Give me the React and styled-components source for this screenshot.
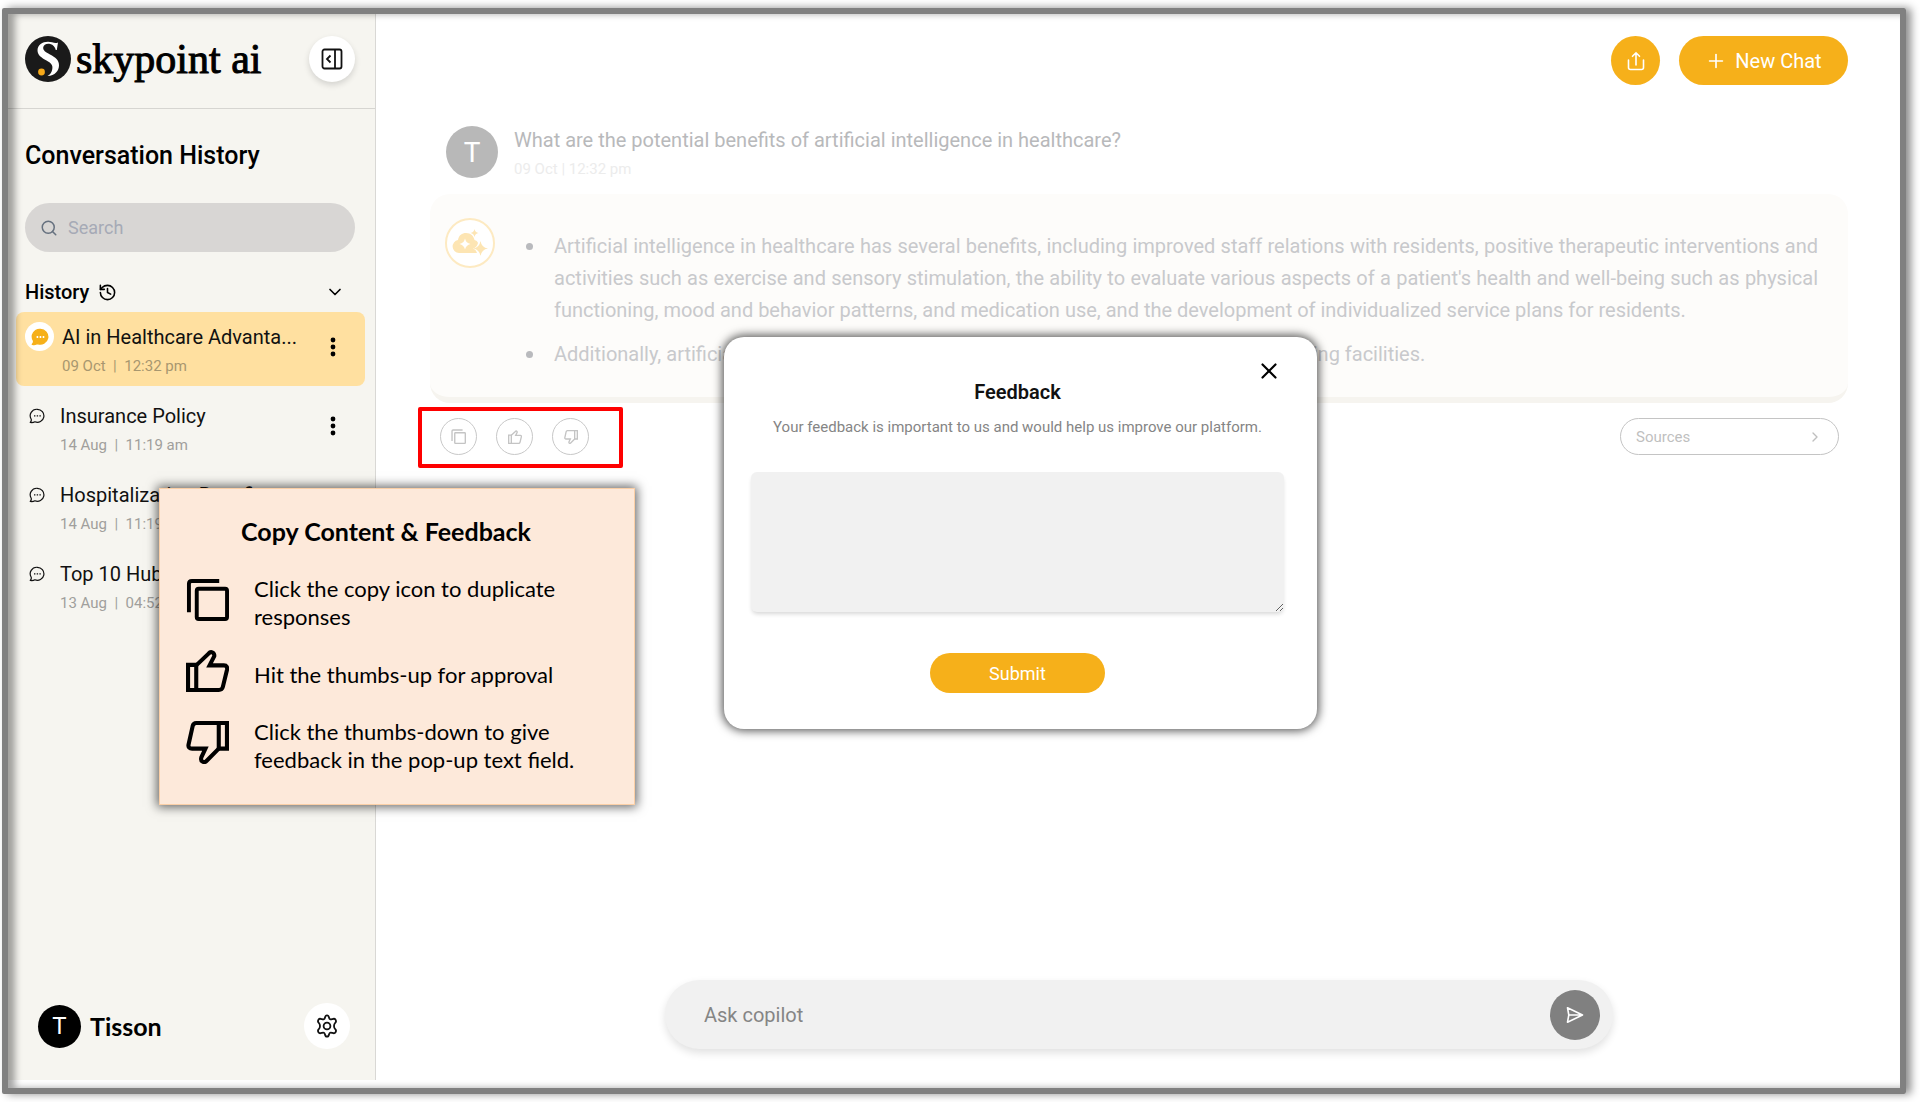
import React, { useState } from "react";
import styled, { createGlobalStyle, css } from "styled-components";
import { ChevronDown, ChevronRight, History, Plus, Search, X } from "lucide-react";

const GlobalStyle = createGlobalStyle`
  *, *::before, *::after {
    box-sizing: border-box;
  }
  body {
    margin: 0;
    background: #fff;
    color: #111;
    font-family: Roboto, "Liberation Sans", sans-serif;
  }
  button, input, textarea {
    font-family: inherit;
  }
  h1, h2, p, ul {
    margin: 0;
    padding: 0;
  }
`;

const Page = styled.div`
  display: flex;
  min-height: 100vh;
  padding: 8px 14px 8px 2px;
`;

const Frame = styled.div`
  position: relative;
  flex: 1;
  display: flex;
  border: 6px solid #808080;
  border-radius: 2px;
  box-shadow: 5px 0 8px rgba(0, 0, 0, 0.45);

  &::after {
    content: "";
    position: absolute;
    inset: 0;
    pointer-events: none;
    box-shadow: inset 7px 0 7px rgba(0, 0, 0, 0.35);
  }
`;

const center = css`
  display: flex;
  align-items: center;
  justify-content: center;
  flex: none;
`;

const RoundButton = styled.button`
  ${center}
  width: ${props => props.size}px;
  height: ${props => props.size}px;
  padding: 0;
  border: 0;
  border-radius: 50%;
  background: ${props => props.bg || "#fff"};
  color: ${props => props.color || "#111"};
  box-shadow: ${props => (props.raised ? "0 3px 6px rgba(0, 0, 0, 0.14)" : "none")};
`;

/* sidebar */

const Sidebar = styled.aside`
  width: 368px;
  flex: none;
  display: flex;
  flex-direction: column;
  margin-bottom: 8px;
  background: #f6f5f0;
  border-right: 1px solid #d9d8d5;
`;

const SidebarHead = styled.header`
  display: flex;
  align-items: center;
  justify-content: space-between;
  height: 95px;
  padding: 0 20px 4px 17px;
  border-bottom: 1px solid #d6d5d1;
`;

const Brand = styled.div`
  display: flex;
  align-items: center;
  gap: 5px;
  font-family: "Liberation Serif", serif;
  font-size: 42px;
  line-height: 46px;
  color: #000;
  -webkit-text-stroke: 1px #000;
`;

const SidebarTitle = styled.h2`
  padding: 31px 17px 0;
  font-size: 25px;
  font-weight: 500;
  line-height: 32px;
  color: #000;
`;

const SearchBox = styled.label`
  display: flex;
  align-items: center;
  gap: 10px;
  height: 49px;
  margin: 31px 20px 0 17px;
  padding: 0 15px;
  border-radius: 25px;
  background: #d8d6d4;
  color: #66717f;

  input {
    flex: 1;
    min-width: 0;
    padding: 0;
    border: 0;
    outline: 0;
    background: none;
    font-size: 18px;
  }
  input::placeholder {
    color: #a6aab6;
  }
`;

const HistoryToggle = styled.button`
  display: flex;
  align-items: center;
  gap: 9px;
  margin: 26px 30px 6px 17px;
  padding: 0;
  border: 0;
  background: none;
  color: #000;
  font-size: 20px;
  font-weight: 500;
  line-height: 28px;

  svg:last-child {
    margin-left: auto;
  }
`;

const ChatList = styled.ul`
  flex: 1;
  display: flex;
  flex-direction: column;
  gap: 5px;
  list-style: none;
`;

const ChatItem = styled.li`
  display: flex;
  height: 74px;
  margin: 0 10px 0 8px;
  padding: 10px 22px 0 ${props => (props.active ? 9 : 13)}px;
  gap: ${props => (props.active ? 8 : 15)}px;
  border-radius: 8px;
  background: ${props => (props.active ? "#ffe0a0" : "transparent")};
`;

const ChatIcon = styled.span`
  ${center}
  width: ${props => (props.active ? 29 : 16)}px;
  height: 29px;
  border-radius: 50%;
  background: ${props => (props.active ? "#fff" : "none")};
`;

const ChatText = styled.div`
  flex: 1;
  min-width: 0;
`;

const ChatTitle = styled.p`
  white-space: nowrap;
  font-size: 20px;
  line-height: 30px;
`;

const ChatDate = styled.p`
  padding-top: 4px;
  font-size: 15px;
  line-height: 20px;
  white-space: pre;
  color: ${props => (props.active ? "#a8976f" : "#a09f9c")};
`;

const KebabButton = styled.button`
  ${center}
  width: 20px;
  height: 50px;
  padding: 0;
  border: 0;
  background: none;
  color: #000;
`;

const UserBar = styled.footer`
  display: flex;
  align-items: center;
  gap: 9px;
  padding: 0 25px 31px 30px;
  font-family: Lato, sans-serif;
  font-size: 25px;
  font-weight: 700;
  color: #000;

  button {
    margin-left: auto;
  }
`;

const Avatar = styled.span`
  ${center}
  width: ${props => props.size}px;
  height: ${props => props.size}px;
  border-radius: 50%;
  background: ${props => props.bg};
  color: #fff;
  font-family: Roboto, sans-serif;
  font-size: ${props => props.font}px;
  font-weight: 400;
`;

/* chat */

const Main = styled.main`
  flex: 1;
  min-width: 0;
  display: flex;
  flex-direction: column;
  padding: 22px 52px 39px 54px;
`;

const TopBar = styled.div`
  display: flex;
  justify-content: flex-end;
  gap: 19px;
`;

const NewChatButton = styled.button`
  ${center}
  gap: 8px;
  width: 169px;
  height: 49px;
  padding: 0;
  border: 0;
  border-radius: 25px;
  background: #f6b01a;
  color: #fff;
  font-size: 20px;
`;

const Question = styled.div`
  display: flex;
  gap: 16px;
  padding: 41px 16px 15px;
`;

const QuestionText = styled.p`
  font-size: 20px;
  line-height: 28px;
  color: #b8b9bb;
`;

const QuestionDate = styled.p`
  padding-top: 5px;
  font-size: 15px;
  line-height: 20px;
  color: #ececec;
`;

const Answer = styled.section`
  display: flex;
  gap: 36px;
  min-height: 209px;
  padding: 24px 30px 26px 15px;
  border-bottom: 6px solid #f6f4ef;
  border-radius: 20px;
  background: #fdfcfa;
`;

const BotBadge = styled.span`
  ${center}
  width: 50px;
  height: 50px;
  border: 2px solid #fdeac2;
  border-radius: 50%;
  background: #fff;
`;

const AnswerList = styled.ul`
  flex: 1;
  padding: 11px 0 0 16px;
  font-size: 20px;
  line-height: 32px;
  text-align: justify;
  color: #c8c9cc;

  li {
    padding-left: 7px;
  }
  li + li {
    margin-top: 11px;
  }
  li::marker {
    color: #b9babd;
    font-size: 24px;
  }
`;

const AnswerFoot = styled.div`
  display: flex;
  align-items: center;
  justify-content: space-between;
  padding: 15px 9px 0 10px;
`;

const Actions = styled.div`
  position: relative;
  display: flex;
  gap: 19px;
`;

const ActionButton = styled.button`
  ${center}
  width: 37px;
  height: 37px;
  padding: 0;
  border: 1px solid #c8c8c8;
  border-radius: 50%;
  background: #fff;
  color: #c4c4c4;
`;

const RedBox = styled.span`
  position: absolute;
  inset: -11px -34px -13px -22px;
  border: 4px solid #fe0000;
  border-radius: 2px;
  pointer-events: none;
`;

const SourcesButton = styled.button`
  display: flex;
  align-items: center;
  justify-content: space-between;
  width: 219px;
  height: 37px;
  padding: 0 15px;
  border: 1px solid #c4c4c4;
  border-radius: 19px;
  background: #fff;
  color: #bfbfbf;
  font-size: 15px;
`;

const Composer = styled.form`
  display: flex;
  align-items: center;
  width: 100%;
  max-width: 948px;
  height: 69px;
  margin: auto auto 0;
  padding: 0 13px 0 39px;
  border-radius: 35px;
  background: #f1f1f1;
  box-shadow: 0 4px 8px rgba(0, 0, 0, 0.12);

  input {
    flex: 1;
    padding: 0;
    border: 0;
    outline: 0;
    background: none;
    font-size: 20px;
  }
  input::placeholder {
    color: #858585;
  }
`;

/* feedback dialog */

const Dialog = styled.form`
  position: absolute;
  left: 716px;
  top: 323px;
  width: 593px;
  display: flex;
  flex-direction: column;
  align-items: center;
  padding: 19px 33px 36px 27px;
  border-radius: 20px;
  background: #fff;
  box-shadow: 0 0 10px 2px rgba(0, 0, 0, 0.65);
`;

const CloseButton = styled.button`
  ${center}
  align-self: flex-end;
  width: 30px;
  height: 30px;
  padding: 0;
  border: 0;
  background: none;
  color: #000;
`;

const DialogTitle = styled.h2`
  margin-top: -8px;
  font-size: 20px;
  font-weight: 600;
  line-height: 28px;
  color: #111;
`;

const DialogLabel = styled.label`
  padding: 11px 0 35px;
  font-size: 15px;
  line-height: 20px;
  color: #858585;
`;

const FeedbackText = styled.textarea`
  width: 100%;
  height: 140px;
  padding: 10px;
  border: 0;
  border-radius: 6px;
  outline: 0;
  background: #f1f1f1;
  box-shadow: 0 3px 4px -1px rgba(0, 0, 0, 0.16);
`;

const SubmitButton = styled.button`
  width: 175px;
  height: 40px;
  margin-top: 41px;
  border: 0;
  border-radius: 20px;
  background: #f6b01a;
  color: #fff;
  font-size: 18px;
`;

/* help note */

const Note = styled.section`
  position: absolute;
  left: 151px;
  top: 474px;
  width: 476px;
  display: flex;
  flex-direction: column;
  gap: 26px;
  padding: 26px 24px 30px 26px;
  border: 1px solid #fbcfa6;
  background: #fde9da;
  box-shadow: 0 0 10px 2px rgba(0, 0, 0, 0.6);
  font-family: Lato, sans-serif;
  color: #000;
`;

const NoteTitle = styled.h2`
  padding: 0 24px 2px 0;
  text-align: center;
  font-size: 25px;
  line-height: 32px;
`;

const NoteRow = styled.div`
  display: flex;
  align-items: center;
  gap: 25px;
  font-size: 22px;
  line-height: 28px;

  svg {
    flex: none;
    margin-top: -8px;
  }
`;

const ThumbUp = props => (
  <svg viewBox="0 0 42 42" fill="none" stroke="currentColor" strokeWidth="4" {...props}>
    <path d="M2 15.500h8V40H2z" />
    <path d="M10 16 22 4.500c2.500-3 6-.8 5.600 2.500L23 16h14c3 0 3.500 2 3 4.500l-4 16.500c-.6 2.500-2 3-4 3H10" />
  </svg>
);

const ThumbDown = props => (
  <svg viewBox="0 0 42 42" fill="none" stroke="currentColor" strokeWidth="4" {...props}>
    <path d="M32 2h8v25h-8z" />
    <path d="M32 2H10C8 2 7 3 6.500 5l-4 18c-.6 2.500 1 4 3.500 4h13l-4 8.500c-1.200 4 2.500 6 5 3.500L32 27" />
  </svg>
);

const CopyIcon = props => (
  <svg viewBox="0 0 44 44" fill="none" stroke="currentColor" strokeWidth="4" {...props}>
    <path d="M3 35V6q0-3 3-3h28" />
    <rect x="11" y="11" width="31" height="31" rx="2" />
  </svg>
);

const BubbleIcon = ({ filled }) => (
  <svg
    width={filled ? 18 : 16}
    height={filled ? 18 : 16}
    viewBox="0 0 16 16"
    fill={filled ? "#f6b01a" : "none"}
    stroke={filled ? "#f6b01a" : "#111"}
    strokeWidth="1.200"
    strokeLinejoin="round"
  >
    <path d="M8.300 1.300a6.500 6.500 0 1 1-2.400 12.500c-1.300.8-3 1-4.700.7 1-.9 1.300-2 1-3.300A6.500 6.500 0 0 1 8.300 1.300z" />
    <path
      d="M5 7.900h1.400M7.700 7.900h1.400M10.400 7.900h1.400"
      stroke={filled ? "#fff" : "#111"}
      strokeWidth={filled ? 1.8 : 1.3}
    />
  </svg>
);

const KebabIcon = () => (
  <svg width="6" height="20" viewBox="0 0 6 20" fill="currentColor">
    <circle cx="3" cy="3" r="2.400" />
    <circle cx="3" cy="10" r="2.400" />
    <circle cx="3" cy="17" r="2.400" />
  </svg>
);

const LogoMark = () => (
  <svg width="46" height="46" viewBox="0 0 46 46">
    <circle cx="23" cy="23" r="23" fill="#1a1a1a" />
    <path
      fill="#fff"
      d="M33 6.500c-2 1-3.500.6-6-.2-7-2-14.500 1.500-14.500 8 0 5 4 7.500 9 10.200 4.500 2.500 6.500 4.500 5.800 8.500-.5 3.200-2 5.600-4.800 7 7.500-.6 11.500-5 11.500-10.800 0-5.200-3.500-7.800-9-10.700-4.600-2.500-7-4-6.800-7 .3-3 3.600-4.300 7-3.500 3 .7 5 3 5.600 6h1z"
    />
    <circle cx="16.500" cy="36" r="3.400" fill="#f6a91a" />
  </svg>
);

const PanelIcon = () => (
  <svg width="22" height="22" viewBox="0 0 22 22" fill="none" stroke="currentColor" strokeWidth="1.800">
    <rect x="1.500" y="1.500" width="19" height="19" rx="2" />
    <path d="M14 1.500v19M9.500 7.500 6 11l3.500 3.500" />
  </svg>
);

const ShareIcon = () => (
  <svg width="18" height="20" viewBox="0 0 18 20" fill="none" stroke="currentColor" strokeWidth="1.600">
    <path d="M1.500 9v7.500q0 2 2 2h11q2 0 2-2V9M9 14V1.800M5.500 5.300 9 1.800l3.500 3.500" strokeLinecap="round" />
  </svg>
);

const SendIcon = () => (
  <svg width="18" height="18" viewBox="0 0 18 18" fill="none" stroke="currentColor" strokeWidth="1.600" strokeLinejoin="round">
    <path d="M1.500 1.800 16.500 9l-15 7.200L2.800 9zM2.800 9h13" />
  </svg>
);

const GearIcon = () => (
  <svg width="24" height="24" viewBox="0 0 24 24" fill="none" stroke="currentColor" strokeWidth="1.800" strokeLinejoin="round">
    <circle cx="12" cy="12" r="3.400" />
    <path d="M12 1.300c1.500 0 1.700.7 2 2.200.4 1.800 1.500 2.300 3 1.700 1.500-.5 2.500-1 3.400.3 1 1.500 1 2.300-.2 3.400-1.600 1.500-1.600 4.700 0 6.200 1.200 1.100 1.200 1.900.2 3.400-.9 1.300-1.900.8-3.400.3-1.500-.6-2.600-.1-3 1.700-.3 1.500-.5 2.200-2 2.200s-1.700-.7-2-2.200c-.4-1.800-1.500-2.300-3-1.700-1.500.5-2.500 1-3.400-.3-1-1.500-1-2.300.2-3.400 1.600-1.500 1.600-4.700 0-6.200-1.200-1.100-1.200-1.900-.2-3.400.9-1.300 1.900-.8 3.400-.3 1.500.6 2.600.1 3-1.700.3-1.500.5-2.200 2-2.200z" />
  </svg>
);

const BotIcon = () => (
  <svg width="36" height="28" viewBox="0 0 36 28">
    <path
      fill="#fde5b3"
      d="M7 24a6.500 6.500 0 0 1-1-12.900C7 6 10 4 14 4c5 0 7.500 3 8.500 7 1.800.3 3 1.500 3.500 3-.8 3-2 4.500-5 5.500 2 .8 3 2 4 4.500z"
    />
    <path fill="#fff" d="M13 9.500q1 4.500 5.500 5.500-4.500 1-5.500 5.500-1-4.500-5.500-5.500 4.500-1 5.500-5.500z" />
    <path
      fill="#fde5b3"
      d="M28.500 12q1 6.500 7.500 7.500-6.500 1-7.500 7.500-1-6.500-7.500-7.500 6.500-1 7.500-7.500zM22.500 0q.6 3.500 4 4-3.400.5-4 4-.6-3.500-4-4 3.400-.5 4-4z"
    />
  </svg>
);

const chats = [
  { title: "AI in Healthcare Advanta...", date: "09 Oct  |  12:32 pm" },
  { title: "Insurance Policy", date: "14 Aug  |  11:19 am" },
  { title: "Hospitalization Benefits", date: "14 Aug  |  11:19 am" },
  { title: "Top 10 Hub", date: "13 Aug  |  04:52 pm" }
];

const App = () => {
  const [active, setActive] = useState(0);

  return (
    <Page>
      <GlobalStyle />
      <Frame>
        <Sidebar>
          <SidebarHead>
            <Brand>
              <LogoMark />
              skypoint ai
            </Brand>
            <RoundButton size={46} raised="true" aria-label="Collapse sidebar">
              <PanelIcon />
            </RoundButton>
          </SidebarHead>
          <SidebarTitle>Conversation History</SidebarTitle>
          <SearchBox>
            <Search size={18} />
            <input type="text" placeholder="Search" aria-label="Search" />
          </SearchBox>
          <HistoryToggle>
            History
            <History size={19} />
            <ChevronDown size={20} />
          </HistoryToggle>
          <ChatList>
            {chats.map((chat, i) => (
              <ChatItem key={chat.title} active={i === active ? 1 : 0} onClick={() => setActive(i)}>
                <ChatIcon active={i === active ? 1 : 0}>
                  <BubbleIcon filled={i === active} />
                </ChatIcon>
                <ChatText>
                  <ChatTitle>{chat.title}</ChatTitle>
                  <ChatDate active={i === active ? 1 : 0}>{chat.date}</ChatDate>
                </ChatText>
                <KebabButton aria-label="Chat options">
                  <KebabIcon />
                </KebabButton>
              </ChatItem>
            ))}
          </ChatList>
          <UserBar>
            <Avatar size={43} bg="#000" font={24}>T</Avatar>
            Tisson
            <RoundButton size={46} aria-label="Settings">
              <GearIcon />
            </RoundButton>
          </UserBar>
        </Sidebar>

        <Main>
          <TopBar>
            <RoundButton size={49} bg="#f6b01a" color="#fff" aria-label="Share">
              <ShareIcon />
            </RoundButton>
            <NewChatButton>
              <Plus size={22} strokeWidth={1.8} />
              New Chat
            </NewChatButton>
          </TopBar>
          <Question>
            <Avatar size={52} bg="#b8b8b8" font={28}>T</Avatar>
            <div>
              <QuestionText>
                What are the potential benefits of artificial intelligence in healthcare?
              </QuestionText>
              <QuestionDate>09 Oct | 12:32 pm</QuestionDate>
            </div>
          </Question>
          <Answer>
            <BotBadge>
              <BotIcon />
            </BotBadge>
            <AnswerList>
              <li>
                Artificial intelligence in healthcare has several benefits, including improved staff
                relations with residents, positive therapeutic interventions and activities such as
                exercise and sensory stimulation, the ability to evaluate various aspects of a
                patient's health and well-being such as physical functioning, mood and behavior
                patterns, and medication use, and the development of individualized service plans
                for residents.
              </li>
              <li>
                Additionally, artificial intelligence can also help improve the quality of care in
                senior living facilities.
              </li>
            </AnswerList>
          </Answer>
          <AnswerFoot>
            <Actions>
              <ActionButton aria-label="Copy">
                <CopyIcon width="15" height="15" />
              </ActionButton>
              <ActionButton aria-label="Thumbs up">
                <ThumbUp width="14" height="14" />
              </ActionButton>
              <ActionButton aria-label="Thumbs down">
                <ThumbDown width="14" height="14" />
              </ActionButton>
              <RedBox />
            </Actions>
            <SourcesButton>
              Sources
              <ChevronRight size={16} />
            </SourcesButton>
          </AnswerFoot>
          <Composer onSubmit={e => e.preventDefault()}>
            <input type="text" placeholder="Ask copilot" aria-label="Ask copilot" />
            <RoundButton size={50} bg="#808080" color="#fff" aria-label="Send">
              <SendIcon />
            </RoundButton>
          </Composer>
        </Main>

        <Note>
          <NoteTitle>Copy Content &amp; Feedback</NoteTitle>
          <NoteRow>
            <CopyIcon width="43" height="43" />
            <p>
              Click the copy icon to duplicate
              <br />
              responses
            </p>
          </NoteRow>
          <NoteRow>
            <ThumbUp width="43" height="43" />
            <p>Hit the thumbs-up for approval</p>
          </NoteRow>
          <NoteRow>
            <ThumbDown width="43" height="43" />
            <p>
              Click the thumbs-down to give
              <br />
              feedback in the pop-up text field.
            </p>
          </NoteRow>
        </Note>

        <Dialog onSubmit={e => e.preventDefault()}>
          <CloseButton type="button" aria-label="Close">
            <X size={26} />
          </CloseButton>
          <DialogTitle>Feedback</DialogTitle>
          <DialogLabel htmlFor="feedback">
            Your feedback is important to us and would help us improve our platform.
          </DialogLabel>
          <FeedbackText id="feedback" />
          <SubmitButton type="submit">Submit</SubmitButton>
        </Dialog>
      </Frame>
    </Page>
  );
};

export default App;
